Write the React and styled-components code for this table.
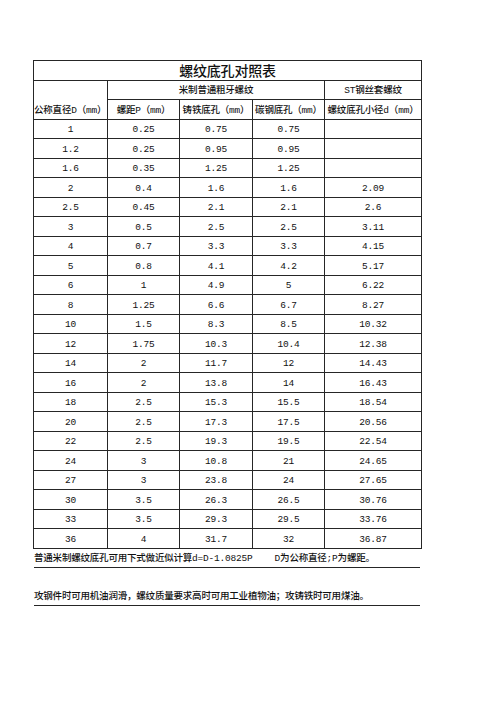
import React from 'react'
import styled, {createGlobalStyle} from 'styled-components'

const GlobalStyle = createGlobalStyle`
  body {
    margin: 0;
    background: #fff;
    color: #111;
    font-family: 'Liberation Mono', 'Noto Sans CJK SC', monospace;
    font-weight: 500;
  }
`

const Page = styled.div`
  padding: 60px 0 0 33px;
  width: 388px;
`

const Sheet = styled.table`
  border-collapse: collapse;
  table-layout: fixed;
  width: 388px;
  font-size: 9.5px;
`

const Row = styled.tr`
  height: 19.5px;
`

const Cell = styled.td`
  border: 1px solid #262626;
  padding: 0 0 2px;
  vertical-align: bottom;
  white-space: nowrap;
  line-height: 12px;
  letter-spacing: -0.2px;
  font-size: ${props => (props.big ? '14px' : '9.5px')};
  text-align: ${props => (props.left ? 'left' : 'center')};
`

const Notes = styled.div`
  width: 386px;
  margin-left: 1px;
  font-size: 9.5px;
  letter-spacing: -0.2px;
`

const NoteRow = styled.div`
  height: 19px;
  box-sizing: border-box;
  display: flex;
  align-items: flex-end;
  padding-bottom: 3px;
  white-space: pre;
  border-bottom: ${props => (props.lined ? '1px solid #262626' : 'none')};
`

const rows = [
  ['1', '0.25', '0.75', '0.75', ''],
  ['1.2', '0.25', '0.95', '0.95', ''],
  ['1.6', '0.35', '1.25', '1.25', ''],
  ['2', '0.4', '1.6', '1.6', '2.09'],
  ['2.5', '0.45', '2.1', '2.1', '2.6'],
  ['3', '0.5', '2.5', '2.5', '3.11'],
  ['4', '0.7', '3.3', '3.3', '4.15'],
  ['5', '0.8', '4.1', '4.2', '5.17'],
  ['6', '1', '4.9', '5', '6.22'],
  ['8', '1.25', '6.6', '6.7', '8.27'],
  ['10', '1.5', '8.3', '8.5', '10.32'],
  ['12', '1.75', '10.3', '10.4', '12.38'],
  ['14', '2', '11.7', '12', '14.43'],
  ['16', '2', '13.8', '14', '16.43'],
  ['18', '2.5', '15.3', '15.5', '18.54'],
  ['20', '2.5', '17.3', '17.5', '20.56'],
  ['22', '2.5', '19.3', '19.5', '22.54'],
  ['24', '3', '10.8', '21', '24.65'],
  ['27', '3', '23.8', '24', '27.65'],
  ['30', '3.5', '26.3', '26.5', '30.76'],
  ['33', '3.5', '29.3', '29.5', '33.76'],
  ['36', '4', '31.7', '32', '36.87']
]

const widths = [74, 72, 73, 72, 97]

export default function App() {
  return (
    <Page>
      <GlobalStyle />
      <Sheet>
        <colgroup>
          {widths.map((w, i) => (
            <col key={i} style={{width: w}} />
          ))}
        </colgroup>
        <tbody>
          <Row>
            <Cell big colSpan={5}>
              螺纹底孔对照表
            </Cell>
          </Row>
          <Row>
            <Cell left rowSpan={2}>
              公称直径D（mm）
            </Cell>
            <Cell colSpan={3}>米制普通粗牙螺纹</Cell>
            <Cell>ST钢丝套螺纹</Cell>
          </Row>
          <Row>
            <Cell>螺距P（mm）</Cell>
            <Cell>铸铁底孔（mm）</Cell>
            <Cell>碳钢底孔（mm）</Cell>
            <Cell>螺纹底孔小径d（mm）</Cell>
          </Row>
          {rows.map(r => (
            <Row key={r[0]}>
              {r.map((v, i) => (
                <Cell key={i}>{v}</Cell>
              ))}
            </Row>
          ))}
        </tbody>
      </Sheet>
      <Notes>
        <NoteRow lined>
          {'普通米制螺纹底孔可用下式做近似计算d=D-1.0825P    D为公称直径;P为螺距。'}
        </NoteRow>
        <NoteRow />
        <NoteRow lined>
          攻钢件时可用机油润滑，螺纹质量要求高时可用工业植物油；攻铸铁时可用煤油。
        </NoteRow>
      </Notes>
    </Page>
  )
}
